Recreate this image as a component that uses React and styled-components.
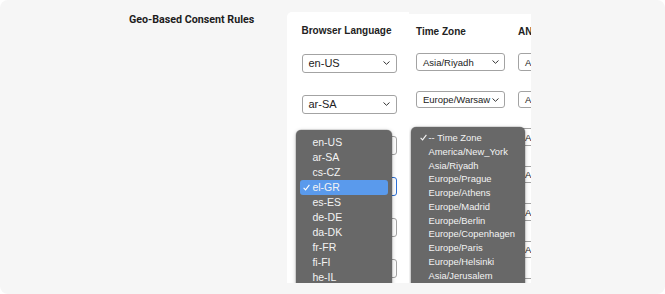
import React from "react";
import styled, { createGlobalStyle } from "styled-components";

const Global = createGlobalStyle`
  html, body { margin: 0; padding: 0; background: #ffffff; }
  body { font-family: "Liberation Sans", Arial, sans-serif; }
`;

const Frame = styled.div`
  width: 665px;
  height: 294px;
  box-sizing: border-box;
  background: #f6f6f6;
  border-radius: 8px;
  display: grid;
  grid-template-columns: 129px 158px 122px 122px 1fr;
  overflow: hidden;
`;

const Title = styled.h2`
  grid-column: 2;
  margin: 0;
  padding-top: 13px;
  font-family: Roboto, "Liberation Sans", Arial, sans-serif;
  font-size: 10.7px;
  line-height: 14px;
  font-weight: 700;
  color: #1d1d1d;
`;

const Panel = styled.div`
  position: relative;
  overflow: hidden;
  background: #ffffff;
  margin-top: ${(p) => p.$top}px;
  height: ${(p) => 283 - p.$top}px;
  border-top-left-radius: ${(p) => (p.$rounded ? "5px" : "0")};
  padding-left: ${(p) => p.$padLeft}px;
  padding-top: ${(p) => p.$padTop}px;
  box-sizing: border-box;
  display: flex;
  gap: ${(p) => p.$colGap || 0}px;
`;

const Column = styled.div`
  flex: 0 0 ${(p) => p.$width}px;
  width: ${(p) => p.$width}px;
  display: flex;
  flex-direction: column;
`;

const Header = styled.div`
  font-size: 10px;
  line-height: 12px;
  font-weight: 700;
  color: #222;
  white-space: nowrap;
  margin-bottom: ${(p) => p.$gapBelow}px;
`;

const SelectList = styled.div`
  display: flex;
  flex-direction: column;
  gap: ${(p) => p.$gap}px;
`;

const SelectBox = styled.div`
  box-sizing: border-box;
  height: ${(p) => p.$h}px;
  background: #fff;
  border: 1px solid ${(p) => (p.$focused ? "#2c6fd4" : "#a3a3a3")};
  border-radius: 3px;
  display: flex;
  align-items: center;
  justify-content: space-between;
  padding: 0 ${(p) => p.$padRight}px 0 6px;
  font-size: ${(p) => p.$fs}px;
  color: #222;
  white-space: nowrap;
  overflow: hidden;
`;

const Chevron = () => (
  <svg width="7" height="4" viewBox="0 0 7 4" style={{ flex: "0 0 auto" }}>
    <path d="M0.5 0.5 L3.5 3.3 L6.5 0.5" fill="none" stroke="#333" strokeWidth="1" />
  </svg>
);

const Check = ({ color = "#f5f5f5" }) => (
  <svg width="7" height="7" viewBox="0 0 7 7">
    <path d="M0.6 3.8 L2.6 5.9 L6.4 0.8" fill="none" stroke={color} strokeWidth="1.1" />
  </svg>
);

const Menu = styled.div`
  position: absolute;
  left: ${(p) => p.$left}px;
  top: ${(p) => p.$top}px;
  width: ${(p) => p.$width}px;
  height: 200px;
  box-sizing: border-box;
  background: #686868;
  border-radius: 5px;
  box-shadow: 0 1px 4px rgba(0, 0, 0, 0.25), 0 0 0 0.5px rgba(0, 0, 0, 0.2);
  padding: ${(p) => p.$padTop}px 4px 0 4px;
  display: flex;
  flex-direction: column;
`;

const MenuItem = styled.div`
  height: ${(p) => p.$h}px;
  flex: 0 0 auto;
  display: flex;
  align-items: center;
  border-radius: 3px;
  background: ${(p) => (p.$active ? "#5a9aec" : "transparent")};
  color: #f3f3f3;
  font-size: ${(p) => p.$fs}px;
  white-space: nowrap;
`;

const CheckSlot = styled.span`
  width: ${(p) => p.$w}px;
  padding-left: ${(p) => p.$pl}px;
  box-sizing: border-box;
  display: inline-flex;
  align-items: center;
`;

const langRows = ["en-US", "ar-SA", "", "", "", ""];
const zoneRows = ["Asia/Riyadh", "Europe/Warsaw", "", "", "", "", ""];
const langOptions = ["en-US", "ar-SA", "cs-CZ", "el-GR", "es-ES", "de-DE", "da-DK", "fr-FR", "fi-FI", "he-IL"];
const zoneOptions = [
  "-- Time Zone",
  "America/New_York",
  "Asia/Riyadh",
  "Europe/Prague",
  "Europe/Athens",
  "Europe/Madrid",
  "Europe/Berlin",
  "Europe/Copenhagen",
  "Europe/Paris",
  "Europe/Helsinki",
  "Asia/Jerusalem",
];

export default function App() {
  return (
    <>
      <Global />
      <Frame>
        <Title>Geo-Based Consent Rules</Title>

        <Panel $top={12} $rounded $padLeft={14.5} $padTop={12.7}>
          <Column $width={95.5}>
            <Header $gapBelow={17.3}>Browser Language</Header>
            <SelectList $gap={22}>
              {langRows.map((v, i) => (
                <SelectBox key={i} $h={19} $fs={11} $padRight={6} $focused={i === 3}>
                  <span>{v}</span>
                  <Chevron />
                </SelectBox>
              ))}
            </SelectList>
          </Column>
          <Menu $left={8.6} $top={118} $width={96.7} $padTop={4.5}>
            {langOptions.map((o) => (
              <MenuItem key={o} $h={15} $fs={10.5} $active={o === "el-GR"}>
                <CheckSlot $w={12.8} $pl={3.6}>{o === "el-GR" && <Check color="#ffffff" />}</CheckSlot>
                {o}
              </MenuItem>
            ))}
          </Menu>
        </Panel>

        <Panel $top={14} $padLeft={7} $padTop={11.7} $colGap={13.3}>
          <Column $width={88.7}>
            <Header $gapBelow={15.6}>Time Zone</Header>
            <SelectList $gap={20}>
              {zoneRows.map((v, i) => (
                <SelectBox key={i} $h={17.5} $fs={9.5} $padRight={5}>
                  <span>{v}</span>
                  <Chevron />
                </SelectBox>
              ))}
            </SelectList>
          </Column>
          <Column $width={88.7}>
            <Header $gapBelow={15.6}>AND/OR</Header>
            <SelectList $gap={20}>
              {zoneRows.map((_, i) => (
                <SelectBox key={i} $h={17.5} $fs={9.5} $padRight={5}>
                  <span>All</span>
                  <Chevron />
                </SelectBox>
              ))}
            </SelectList>
          </Column>
          <Menu $left={1.5} $top={112.7} $width={114.5} $padTop={4.1}>
            {zoneOptions.map((o, i) => (
              <MenuItem key={o} $h={13.75} $fs={9.4}>
                <CheckSlot $w={14} $pl={5}>{i === 0 && <Check />}</CheckSlot>
                {o}
              </MenuItem>
            ))}
          </Menu>
        </Panel>
      </Frame>
    </>
  );
}
